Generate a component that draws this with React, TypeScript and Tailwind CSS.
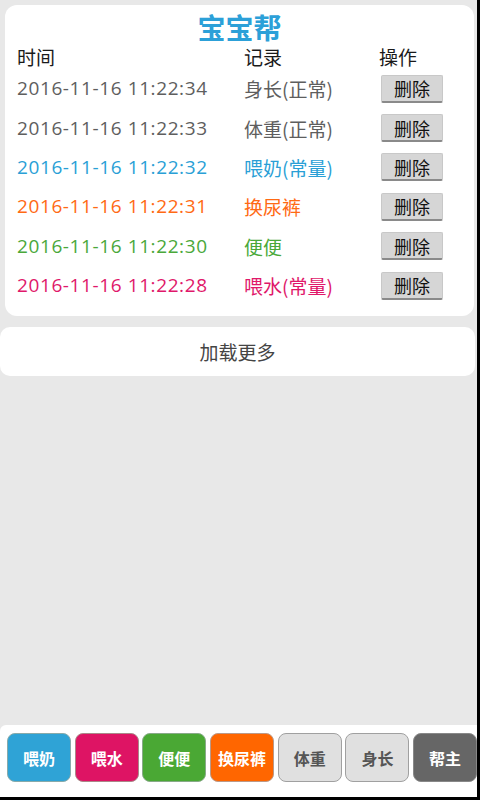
import React from "react";

const rows = [
  { t: "2016-11-16 11:22:34", r: "身长(正常)", c: "text-[#5e5e5e]" },
  { t: "2016-11-16 11:22:33", r: "体重(正常)", c: "text-[#5e5e5e]" },
  { t: "2016-11-16 11:22:32", r: "喂奶(常量)", c: "text-[#2a9fd6]" },
  { t: "2016-11-16 11:22:31", r: "换尿裤", c: "text-[#ff6a14]" },
  { t: "2016-11-16 11:22:30", r: "便便", c: "text-[#4aa83a]" },
  { t: "2016-11-16 11:22:28", r: "喂水(常量)", c: "text-[#e0186a]" },
];

const tabs = [
  { l: "喂奶", c: "bg-[#2fa3d6] text-white border-[#8aa]" },
  { l: "喂水", c: "bg-[#de1464] text-white border-[#a88]" },
  { l: "便便", c: "bg-[#4aa834] text-white border-[#8a8]" },
  { l: "换尿裤", c: "bg-[#ff6600] text-white border-[#b98]" },
  { l: "体重", c: "bg-[#e0e0e0] text-[#555] border-[#a0a0a0]" },
  { l: "身长", c: "bg-[#e0e0e0] text-[#555] border-[#a0a0a0]" },
  { l: "帮主", c: "bg-[#666666] text-white border-[#888]" },
];

const cjk = { fontFamily: '"Noto Sans CJK SC", sans-serif' };
const num = { fontFamily: '"Open Sans", "Noto Sans CJK SC", sans-serif' };

export default function App() {
  return (
    <div className="w-[480px] h-[800px] bg-black" style={cjk}>
      <div className="w-[477px] h-[797px] bg-[#e8e8e8] flex flex-col overflow-hidden">
        <div className="mx-[5px] mt-[5px] w-[469px] bg-white rounded-[12px] pt-[6px] pb-[11px] pl-[12px]">
          <div className="h-[32px] flex items-center justify-center text-[28px] font-bold text-[#2ca0d8] leading-none pr-[12px]">
            宝宝帮
          </div>
          <div className="grid grid-cols-[227px_135px_1fr] h-[26px] items-center text-[19px] text-[#1a1a1a] leading-none">
            <div>时间</div>
            <div>记录</div>
            <div>操作</div>
          </div>
          {rows.map((row, i) => (
            <div
              key={i}
              className={`grid grid-cols-[227px_135px_1fr] h-[39.4px] items-center text-[19px] leading-none ${row.c}`}
            >
              <div className="tracking-[0.6px]" style={num}>
                {row.t}
              </div>
              <div>{row.r}</div>
              <div>
                <div className="ml-[2px] w-[62px] h-[28px] bg-[#d6d6d6] border border-[#c8c8c8] border-b-[2px] border-b-[#8a8a8a] rounded-[2px] flex items-center justify-center text-[18px] text-[#111]">
                  删除
                </div>
              </div>
            </div>
          ))}
        </div>
        <div className="mt-[11px] w-[475px] h-[49px] bg-white rounded-[10px] flex items-center justify-center text-[19px] text-[#444]">
          加载更多
        </div>
        <div className="mt-auto h-[72px] bg-white rounded-tl-[6px] flex gap-[3.7px] pl-[7px] pt-[8px] overflow-hidden">
          {tabs.map((t, i) => (
            <div
              key={i}
              className={`w-[64px] h-[49px] shrink-0 rounded-[8px] border flex items-center justify-center text-[16px] font-bold ${t.c}`}
            >
              {t.l}
            </div>
          ))}
        </div>
      </div>
    </div>
  );
}
